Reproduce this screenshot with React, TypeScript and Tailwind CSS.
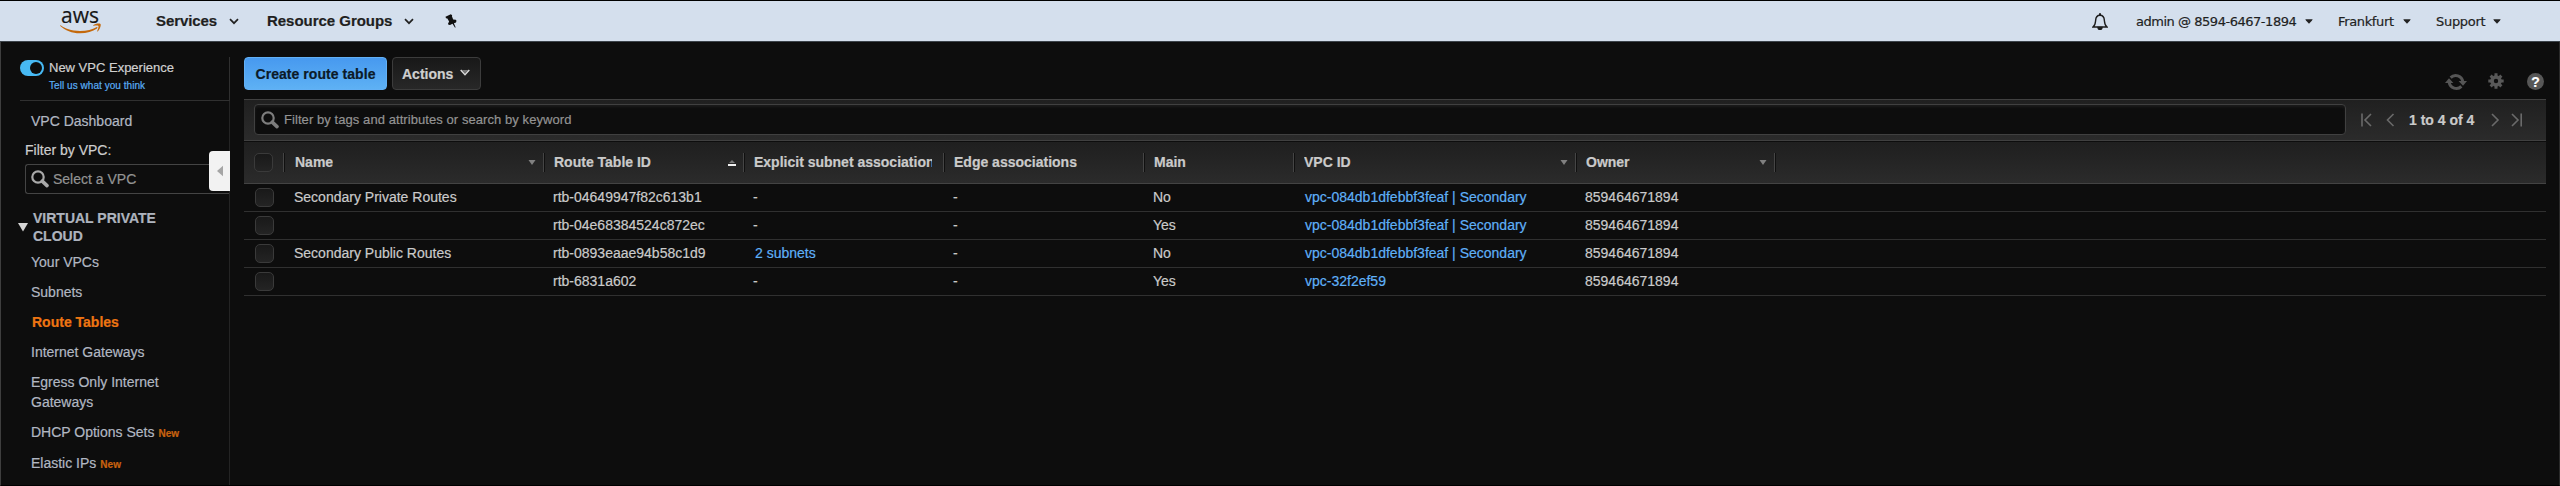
import type { ReactNode } from "react";

type Column = {
  label: string;
  width: string;
  sort?: "down" | "up";
};

const columns: Column[] = [
  { label: "Name", width: "w-[260px] pl-[11px]", sort: "down" },
  { label: "Route Table ID", width: "w-[200px] pl-[10px]", sort: "up" },
  { label: "Explicit subnet associations", width: "w-[200px] pl-[10px]" },
  { label: "Edge associations", width: "w-[200px] pl-[10px]" },
  { label: "Main", width: "w-[150px] pl-[10px]" },
  { label: "VPC ID", width: "w-[282px] pl-[10px]", sort: "down" },
  { label: "Owner", width: "w-[199px] pl-[10px]", sort: "down" },
];

type Row = {
  name: string;
  id: string;
  subnets?: string;
  main: string;
  vpc: string;
};

const rows: Row[] = [
  { name: "Secondary Private Routes", id: "rtb-04649947f82c613b1", main: "No", vpc: "vpc-084db1dfebbf3feaf | Secondary" },
  { name: "", id: "rtb-04e68384524c872ec", main: "Yes", vpc: "vpc-084db1dfebbf3feaf | Secondary" },
  { name: "Secondary Public Routes", id: "rtb-0893eaae94b58c1d9", subnets: "2 subnets", main: "No", vpc: "vpc-084db1dfebbf3feaf | Secondary" },
  { name: "", id: "rtb-6831a602", main: "Yes", vpc: "vpc-32f2ef59" },
];

const links: { label: string; active?: boolean; isNew?: boolean }[] = [
  { label: "Your VPCs" },
  { label: "Subnets" },
  { label: "Route Tables", active: true },
  { label: "Internet Gateways" },
  { label: "Egress Only Internet Gateways" },
  { label: "DHCP Options Sets", isNew: true },
  { label: "Elastic IPs", isNew: true },
];

function Chevron() {
  return (
    <svg viewBox="0 0 10 7" className="h-[7px] w-[10px]" fill="none" stroke="#222" strokeWidth="1.7">
      <path d="M1 1.2 5 5.2 9 1.2" />
    </svg>
  );
}

function Caret({ className = "" }: { className?: string }) {
  return (
    <svg viewBox="0 0 8 5" className={`h-[5px] w-[8px] ${className}`} fill="#222">
      <path d="M0.3 0.2H7.7L7 1.6 4 4.8 1 1.6Z" />
    </svg>
  );
}

function Magnifier({ color }: { color: string }) {
  return (
    <svg viewBox="0 0 18 18" className="size-[18px] shrink-0" fill="none" stroke={color}>
      <circle cx="7" cy="7" r="5.7" strokeWidth="2.2" />
      <path d="M11.2 11.2 16 15.6" strokeWidth="3.6" strokeLinecap="round" />
    </svg>
  );
}

function AwsLogo() {
  return (
    <div className="relative h-[40px] w-[42px]">
      <span className="absolute left-[1px] top-[2px] font-['Open_Sans',sans-serif] text-[21px] leading-[24px] text-[#161616]">aws</span>
      <svg viewBox="0 0 42 11" className="absolute left-0 top-[22px] h-[11px] w-[42px]" fill="#c4690c">
        <path d="M0.6 2.3C5 5.6 11 8 20 8 27 8 32.5 6.4 36.4 4.2 37.4 3.8 38 4.8 37 5.5 32.5 8.6 27 10.2 20 10.2 12 10.2 5 7.3 0.3 2.9 0 2.4 0.2 2 0.6 2.3Z" />
        <path d="M33.2 2.2C35 0.6 39.5 0.2 40.5 1 41.3 1.8 40 6.6 37.8 8.4 37.3 8.7 37 8.4 37.2 8 38 6 38.9 3.6 38.4 2.9 37.8 2.1 35.6 2.5 33.6 2.7 33 2.7 33 2.4 33.2 2.2Z" />
      </svg>
    </div>
  );
}

function Header() {
  return (
    <header className="flex h-[42px] w-full items-center border-b border-t border-b-[#3c434a] border-t-black bg-[#d4dfed] text-[#1f1f1f]">
      <div className="ml-[60px]">
        <AwsLogo />
      </div>
      <div className="ml-[54px] flex w-[83px] items-center justify-between pt-px text-[15px] font-bold">
        <span className="tracking-[-0.1px]">Services</span>
        <Chevron />
      </div>
      <div className="ml-[28px] flex w-[147px] items-center justify-between whitespace-nowrap pt-px text-[15px] font-bold">
        <span className="tracking-[-0.03px]">Resource Groups</span>
        <Chevron />
      </div>
      <svg viewBox="0 0 12 14" className="ml-[31px] h-[14px] w-[12px]" fill="#111">
        <path d="M5.8 0.2 7.2 1.2 6.9 2.3 8.2 5.4 10.8 5.8 11.5 6.8 11 8.4 8.9 9.2 10.7 13.4 9.9 13.4 7.5 9.7 5 11 3.5 10.8 3 9.8 4.1 7.4 2.4 4.4 1 4.2 0.5 2.8Z" />
      </svg>
      <div className="ml-auto mr-[59px] flex items-center pt-px font-['DejaVu_Sans',sans-serif] text-[13px]">
        <svg viewBox="0 0 16 17" className="mr-[28px] h-[17px] w-[16px]" fill="none" stroke="#1c1c1c" strokeWidth="1.4">
          <path d="M1 14H15C12.6 12.3 12.6 10.5 12.4 7.6 12.2 4.2 10.5 2.3 8 2.3S3.8 4.2 3.6 7.6C3.4 10.5 3.4 12.3 1 14Z" />
          <path d="M8 0.3V2.3" strokeWidth="2" />
          <path d="M6 14.5H10A2 2 0 0 1 6 14.5Z" fill="#1c1c1c" />
        </svg>
        <span className="w-[160px] whitespace-nowrap tracking-[-0.47px]">admin @ 8594-6467-1894</span>
        <Caret className="ml-[9px]" />
        <span className="ml-[25px] w-[56px] whitespace-nowrap tracking-[-0.35px]">Frankfurt</span>
        <Caret className="ml-[9px]" />
        <span className="ml-[25px] w-[49px] whitespace-nowrap tracking-[-0.3px]">Support</span>
        <Caret className="ml-[8px]" />
      </div>
    </header>
  );
}

function NewTag() {
  return <span className="ml-1 text-[10px] font-bold leading-none text-[#c8620f]">New</span>;
}

function Sidebar() {
  return (
    <aside className="mt-[15px] flex w-[229px] shrink-0 flex-col text-[14px] text-[#b1b7c2]">
      <div className="flex h-[44px] border-r border-[#303030]">
        <div className="ml-[19px] flex flex-1 border-b border-[#303030]">
          <div className="mt-[3px] flex h-[16px] w-[24px] items-center justify-end rounded-full bg-[#47b9f3] pr-[2px]">
            <div className="size-[12px] rounded-full bg-[#0d0d0d]" />
          </div>
          <div className="ml-[5px]">
            <div className="mt-[2px] text-[13px] leading-[18px] text-[#d0d0d0]">New VPC Experience</div>
            <div className="mt-[2px] text-[10px] leading-[14px] tracking-[0.05px] text-[#5aaef5]">Tell us what you think</div>
          </div>
        </div>
      </div>
      <div className="flex h-[385px] flex-col border-r border-[#242424]">
        <div className="ml-[30px] mt-[10px] leading-[20px]">VPC Dashboard</div>
        <div className="ml-[24px] mt-[9px] leading-[20px] text-[#cdcdcd]">Filter by VPC:</div>
        <div className="relative ml-[24px] mt-[4px] flex h-[30px] items-center rounded-l-[3px] border border-r-0 border-[#444] pl-[5px]">
          <Magnifier color="#a9a9a9" />
          <span className="ml-[4px] pt-px text-[#939393]">Select a VPC</span>
          <div className="absolute -top-[14px] left-[183px] flex h-[40px] w-[21px] items-center rounded-l-[4px] bg-[#f2f2f2]">
            <svg viewBox="0 0 7 12" className="ml-[8px] mt-px h-[12px] w-[6px]" fill="#a5a5a5">
              <path d="M7 0V12L0 6Z" />
            </svg>
          </div>
        </div>
        <div className="ml-[17px] mt-[15px] flex items-center font-bold leading-[18px]">
          <svg viewBox="0 0 10 9" className="mr-[5px] mt-px h-[9px] w-[10px] shrink-0" fill="#d5d5d5">
            <path d="M0 0H10L5 8.5Z" />
          </svg>
          <div className="w-[140px] text-[#adb3be]">VIRTUAL PRIVATE CLOUD</div>
        </div>
        <nav className="ml-[30px] mt-[7px] flex w-[165px] flex-col gap-[10px] leading-[20px]">
          {links.map((l) => (
            <div key={l.label} className={l.active ? "pl-px font-bold text-[#ee7512]" : "last:pt-px"}>
              {l.label}
              {l.isNew && <NewTag />}
            </div>
          ))}
        </nav>
      </div>
    </aside>
  );
}

function Checkbox() {
  return <div className="size-[19px] rounded-[5px] border border-[#3a3a3a] bg-linear-to-b from-[#191919] to-[#242424]" />;
}

function SortMark({ direction }: { direction: "down" | "up" }) {
  return direction === "down" ? (
    <svg viewBox="0 0 8 5" className="mr-[7px] h-[5px] w-[8px] shrink-0" fill="#808080">
      <path d="M0.5 0H7.5L4 5Z" />
    </svg>
  ) : (
    <svg viewBox="0 0 8 6" className="mr-[7px] h-[6px] w-[8px] shrink-0">
      <path d="M4 0 7 3H1Z" fill="#777" />
      <path d="M0 4H8V6H0Z" fill="#f0f0f0" />
    </svg>
  );
}

function PageArrow({ d }: { d: string }) {
  return (
    <svg viewBox="0 0 12 14" className="h-[14px] w-[12px]" fill="none" stroke="#6a6a6a" strokeWidth="1.6">
      <path d={d} />
    </svg>
  );
}

function Cell({ className, children }: { className: string; children: ReactNode }) {
  return <div className={`shrink-0 whitespace-nowrap ${className}`}>{children}</div>;
}

function RefreshIcon() {
  return (
    <svg viewBox="0 0 22 18" className="h-[18px] w-[22px]" fill="none" stroke="#555" strokeWidth="3">
      <path d="M5.6 4.6A7.2 7.2 0 0 1 17.8 8.5" />
      <path d="M16.4 13.4A7.2 7.2 0 0 1 4.2 9.5" />
      <path d="M13.6 8H22L18 12.8Z" fill="#555" stroke="none" />
      <path d="M0 10H8.4L4 5.2Z" fill="#555" stroke="none" />
    </svg>
  );
}

function GearIcon() {
  return (
    <svg viewBox="0 0 16 16" className="size-[16px]" fill="none" stroke="#585858">
      <circle cx="8" cy="8" r="4" strokeWidth="3.6" />
      <path
        d="M8 0.3V3M8 13v2.7M0.3 8H3M13 8h2.7M2.6 2.6l1.9 1.9M11.5 11.5l1.9 1.9M2.6 13.4l1.9-1.9M11.5 4.5l1.9-1.9"
        strokeWidth="3"
      />
    </svg>
  );
}

function Toolbar() {
  return (
    <div className="flex h-[42px] justify-between">
      <div className="flex h-[33px] gap-[5px] text-[14px] font-bold">
        <button className="flex w-[143px] items-center justify-center rounded-[4px] border border-[#62b0f5] bg-linear-to-b from-[#4799ef] to-[#5eb1f4] pt-[2px] tracking-[0.05px] text-[#0c1a28]">
          Create route table
        </button>
        <button className="flex w-[89px] items-center rounded-[4px] border border-[#3c3c3c] bg-linear-to-b from-[#181818] to-[#282828] pl-[9px] pt-[2px] text-[#cfcfcf]">
          Actions
          <svg viewBox="0 0 10 7" className="-mt-[4px] ml-[7px] h-[7px] w-[10px]" fill="none" stroke="#dcdcdc" strokeWidth="1.4">
            <path d="M1.8 1H8.2L5 4.4Z" fill="#777" stroke="none" />
            <path d="M0.7 1 5 5.7 9.3 1" />
          </svg>
        </button>
      </div>
      <div className="mr-[2px] mt-[16px] flex h-[18px] items-center">
        <RefreshIcon />
        <div className="-mt-[2px] ml-[21px]">
          <GearIcon />
        </div>
        <div className="-mt-[1px] ml-[23px] flex size-[17px] items-center justify-center rounded-full bg-[#575757] text-[14px] font-bold leading-none text-white">
          ?
        </div>
      </div>
    </div>
  );
}

export default function App() {
  return (
    <div className="flex h-[486px] w-[2560px] flex-col overflow-hidden bg-[#0d0d0d] font-['Liberation_Sans',Arial,sans-serif] [-webkit-text-stroke:0.2px]">
      <Header />
      <div className="flex h-[444px] overflow-hidden border-x border-b border-b-black border-l-[#3e3e3e] border-r-[#2a2a2a]">
        <Sidebar />
        <main className="ml-[14px] mr-[13px] mt-[15px] flex min-w-0 flex-1 flex-col text-[14px] text-[#cacaca]">
          <Toolbar />
          <div className="flex h-[42px] shrink-0 items-center border-y border-[#404040] bg-linear-to-b from-[#202020] to-[#2b2b2b] pl-[10px]">
            <div className="-mt-px flex h-[31px] w-[2092px] shrink-0 items-center rounded-[4px] border border-[#404040] bg-[#0d0d0d] pl-[6px] shadow-[inset_0_2px_3px_#1c1c1c]">
              <Magnifier color="#7d7d7d" />
              <span className="ml-[5px] text-[13px] tracking-[0.07px] text-[#939393]">Filter by tags and attributes or search by keyword</span>
            </div>
            <div className="flex items-center pl-[14px]">
              <PageArrow d="M2 0.5V13.5M11 1 5 7 11 13" />
              <div className="ml-[13px]">
                <PageArrow d="M8.5 1 2.5 7 8.5 13" />
              </div>
              <span className="ml-[12px] w-[66px] whitespace-nowrap pt-px font-bold">1 to 4 of 4</span>
              <div className="ml-[14px]">
                <PageArrow d="M3 1 9 7 3 13" />
              </div>
              <div className="ml-[10px]">
                <PageArrow d="M1 1 7 7 1 13M10.2 0.5V13.5" />
              </div>
            </div>
          </div>
          <div className="flex h-[43px] shrink-0 items-center border-b border-t border-b-[#434343] border-t-[#0d0d0d] bg-linear-to-b from-[#1f1f1f] to-[#2b2b2b] font-bold">
            <div className="flex h-[19px] w-[40px] shrink-0 items-center border-r border-[#454545] pl-[10px] shadow-[1px_0_0_#101010]">
              <Checkbox />
            </div>
            {columns.map((c) => (
              <div
                key={c.label}
                className={`flex h-[19px] shrink-0 items-center justify-between border-r border-[#454545] shadow-[1px_0_0_#101010] ${c.width}`}
              >
                <span className={`overflow-hidden whitespace-nowrap ${c.sort ? "" : "mr-[11px]"}`}>{c.label}</span>
                {c.sort && <SortMark direction={c.sort} />}
              </div>
            ))}
          </div>
          {rows.map((r) => (
            <div key={r.id} className="flex h-[28px] shrink-0 items-center border-b border-[#303030]">
              <div className="w-[50px] shrink-0 pl-[11px]">
                <Checkbox />
              </div>
              <Cell className="w-[259px]">{r.name}</Cell>
              <Cell className="w-[200px]">{r.id}</Cell>
              <Cell className="w-[200px]">{r.subnets ? <span className="pl-[2px] text-[#5fb0f7]">{r.subnets}</span> : "-"}</Cell>
              <Cell className="w-[200px]">-</Cell>
              <Cell className="w-[152px]">{r.main}</Cell>
              <Cell className="w-[280px] text-[#5fb0f7]">{r.vpc}</Cell>
              <Cell className="w-[200px]">859464671894</Cell>
            </div>
          ))}
        </main>
      </div>
    </div>
  );
}
